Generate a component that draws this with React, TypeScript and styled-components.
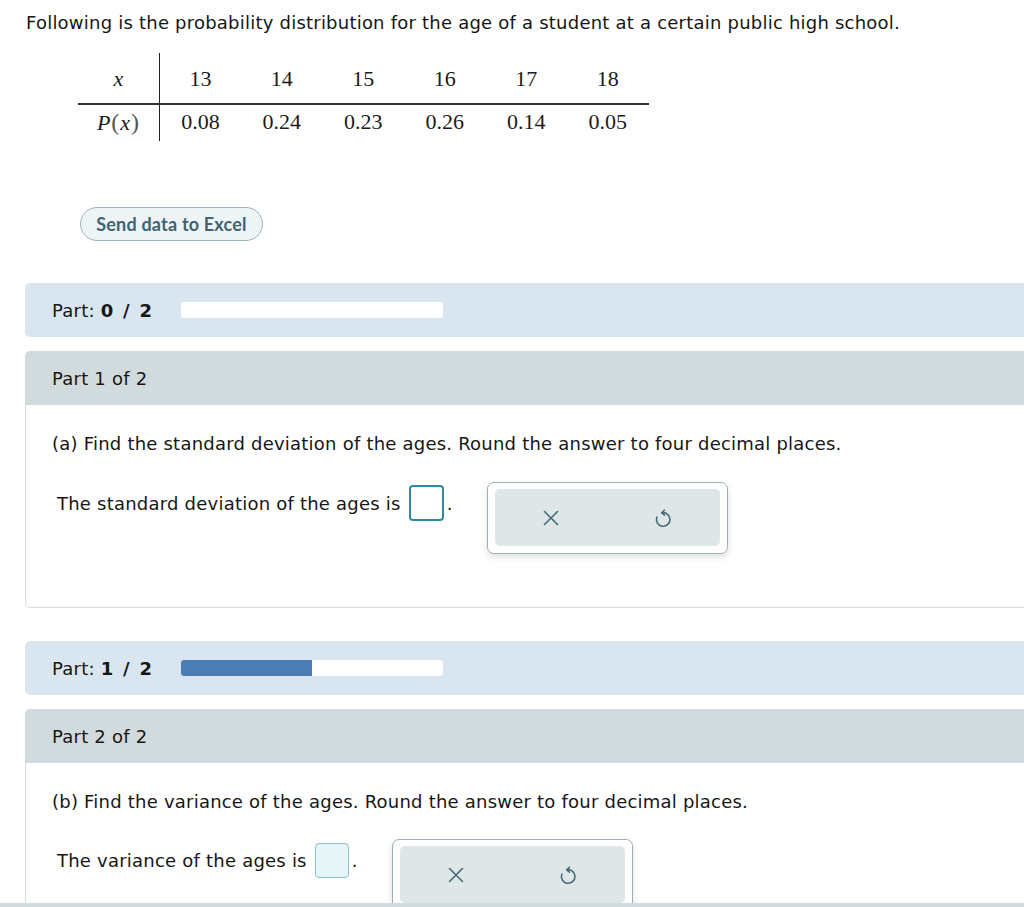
import React from "react";
import styled, { createGlobalStyle } from "styled-components";

const Global = createGlobalStyle`
  html, body { margin: 0; padding: 0; background: #fff; overflow: hidden; }
  body { font-family: "DejaVu Sans", Verdana, sans-serif; color: #161616; }
`;

const Page = styled.div`
  width: 1060px;
  padding: 12px 0 0 25px;
  box-sizing: border-box;
`;

const Text = styled.p`
  margin: 0;
  font-size: 18px;
  line-height: 22px;
  letter-spacing: 0.22px;
`;

const Intro = styled(Text)`
  margin-left: 1px;
`;

const TableWrap = styled.div`
  margin: 19px 0 0 53px;
`;

const DistTable = styled.table`
  border-collapse: collapse;
  font-family: "Liberation Serif", "Times New Roman", serif;
  font-size: 22px;
  color: #1b1b1b;
`;

const Cell = styled.td<{ $head?: boolean; $top?: boolean }>`
  width: 81.5px;
  padding: 0;
  text-align: center;
  height: ${(p) => (p.$top ? "51px" : "37px")};
  vertical-align: ${(p) => (p.$top ? "middle" : "top")};
  padding-top: ${(p) => (p.$top ? "2px" : "4px")};
  border-right: ${(p) => (p.$head ? "1px solid #222" : "none")};
  border-bottom: ${(p) => (p.$top ? "2px solid #333" : "none")};
  box-sizing: border-box;
  font-style: ${(p) => (p.$head ? "italic" : "normal")};
`;

const Paren = styled.span`
  font-style: normal;
  font-size: 24px;
  color: #555;
  margin: 0 1px;
`;

const ExcelButton = styled.button`
  margin: 66px 0 0 55px;
  width: 183px;
  height: 34px;
  border-radius: 17px;
  border: 1px solid #9fb4bb;
  background: #eef3f5;
  color: #3d6572;
  font-family: Lato, "Open Sans", sans-serif;
  font-weight: 700;
  font-size: 18px;
  letter-spacing: 0.2px;
  padding: 0;
  display: block;
`;

const PartBar = styled.div<{ $mt: number }>`
  margin-top: ${(p) => p.$mt}px;
  height: 54px;
  background: #dae6ef;
  border-radius: 5px 0 0 5px;
  display: flex;
  align-items: center;
  padding-left: 27px;
  font-size: 18px;
  letter-spacing: 0.22px;
`;

const PartLabel = styled.span`
  width: 129px;
  b { letter-spacing: 1.8px; }
`;

const Progress = styled.div`
  width: 262px;
  height: 16px;
  background: #fff;
  border-radius: 3px;
  overflow: hidden;
  display: flex;
`;

const Fill = styled.div`
  height: 100%;
  background: #4a7db4;
`;

const PartCard = styled.section`
  margin-top: 14px;
`;

const PartHeader = styled.div`
  height: 54px;
  background: #d1dadd;
  border-radius: 5px 0 0 0;
  display: flex;
  align-items: center;
  padding-left: 27px;
  font-size: 18px;
  letter-spacing: 0.22px;
`;

const PartBody = styled.div`
  border: 1px solid #d3dbde;
  border-top: none;
  border-right: none;
  border-radius: 0 0 0 5px;
  padding: 28px 0 53px 26px;
`;

const AnswerRow = styled.div<{ $mt: number }>`
  display: flex;
  align-items: flex-start;
  gap: 34px;
  margin-top: ${(p) => p.$mt}px;
  padding-left: 5px;
`;

const Statement = styled.div<{ $mt: number }>`
  display: flex;
  align-items: center;
  gap: 3px;
  font-size: 18px;
  letter-spacing: 0.22px;
  margin-top: ${(p) => p.$mt}px;
`;

const AnswerBox = styled.span<{ $active?: boolean }>`
  display: inline-block;
  box-sizing: border-box;
  width: ${(p) => (p.$active ? "35px" : "34px")};
  height: ${(p) => (p.$active ? "36px" : "35px")};
  margin-left: 5px;
  border-radius: 4px;
  border: ${(p) => (p.$active ? "2px solid #2a8c9c" : "1.5px solid #86c2cd")};
  background: ${(p) => (p.$active ? "#fff" : "#e6f4f8")};
`;

const Toolbox = styled.div`
  width: 241px;
  height: 72px;
  box-sizing: border-box;
  border: 1px solid #9eb0b7;
  border-radius: 7px;
  background: #fff;
  padding: 6px 7px;
  box-shadow: 0 3px 7px rgba(0, 0, 0, 0.12);
`;

const ToolInner = styled.div`
  height: 57px;
  background: #dfe6e8;
  border-radius: 5px;
  display: grid;
  grid-template-columns: 1fr 1fr;
  align-items: center;
  justify-items: center;
`;

const ToolIcon = styled.svg`
  width: 24px;
  height: 24px;
  stroke: #436a76;
  fill: none;
  stroke-width: 1.6;
  stroke-linecap: round;
  stroke-linejoin: round;
`;

const BottomStrip = styled.div`
  position: fixed;
  left: 0;
  right: 0;
  bottom: 0;
  height: 4px;
  background: #d1dadd;
`;

const ClearIcon = () => (
  <ToolIcon viewBox="0 0 24 24">
    <path d="M5.5 5.5 L18.5 18.5 M18.5 5.5 L5.5 18.5" />
  </ToolIcon>
);

const UndoIcon = () => (
  <ToolIcon viewBox="0 0 24 24">
    <path d="M11 6.8 A6.8 6.8 0 1 1 5.9 11" />
    <path d="M13.4 4.2 L10.8 6.8 L13.5 9.1" />
  </ToolIcon>
);

const xs = [13, 14, 15, 16, 17, 18];
const ps = ["0.08", "0.24", "0.23", "0.26", "0.14", "0.05"];

const Tools = () => (
  <Toolbox>
    <ToolInner>
      <ClearIcon />
      <UndoIcon />
    </ToolInner>
  </Toolbox>
);

export default function App() {
  return (
    <>
      <Global />
      <Page>
        <Intro>Following is the probability distribution for the age of a student at a certain public high school.</Intro>
        <TableWrap>
          <DistTable>
            <tbody>
              <tr>
                <Cell $head $top>x</Cell>
                {xs.map((x) => (
                  <Cell key={x} $top>{x}</Cell>
                ))}
              </tr>
              <tr>
                <Cell $head>
                  P<Paren>(</Paren>x<Paren>)</Paren>
                </Cell>
                {ps.map((p) => (
                  <Cell key={p}>{p}</Cell>
                ))}
              </tr>
            </tbody>
          </DistTable>
        </TableWrap>
        <ExcelButton>Send data to Excel</ExcelButton>

        <PartBar $mt={42}>
          <PartLabel>
            Part: <b>0 / 2</b>
          </PartLabel>
          <Progress />
        </PartBar>
        <PartCard>
          <PartHeader>Part 1 of 2</PartHeader>
          <PartBody>
            <Text>(a) Find the standard deviation of the ages. Round the answer to four decimal places.</Text>
            <AnswerRow $mt={27}>
              <Statement $mt={3}>
                The standard deviation of the ages is <AnswerBox $active />.
              </Statement>
              <Tools />
            </AnswerRow>
          </PartBody>
        </PartCard>

        <PartBar $mt={33}>
          <PartLabel>
            Part: <b>1 / 2</b>
          </PartLabel>
          <Progress>
            <Fill style={{ width: "50%" }} />
          </Progress>
        </PartBar>
        <PartCard>
          <PartHeader>Part 2 of 2</PartHeader>
          <PartBody>
            <Text>(b) Find the variance of the ages. Round the answer to four decimal places.</Text>
            <AnswerRow $mt={26}>
              <Statement $mt={4}>
                The variance of the ages is <AnswerBox />.
              </Statement>
              <Tools />
            </AnswerRow>
          </PartBody>
        </PartCard>
      </Page>
      <BottomStrip />
    </>
  );
}
